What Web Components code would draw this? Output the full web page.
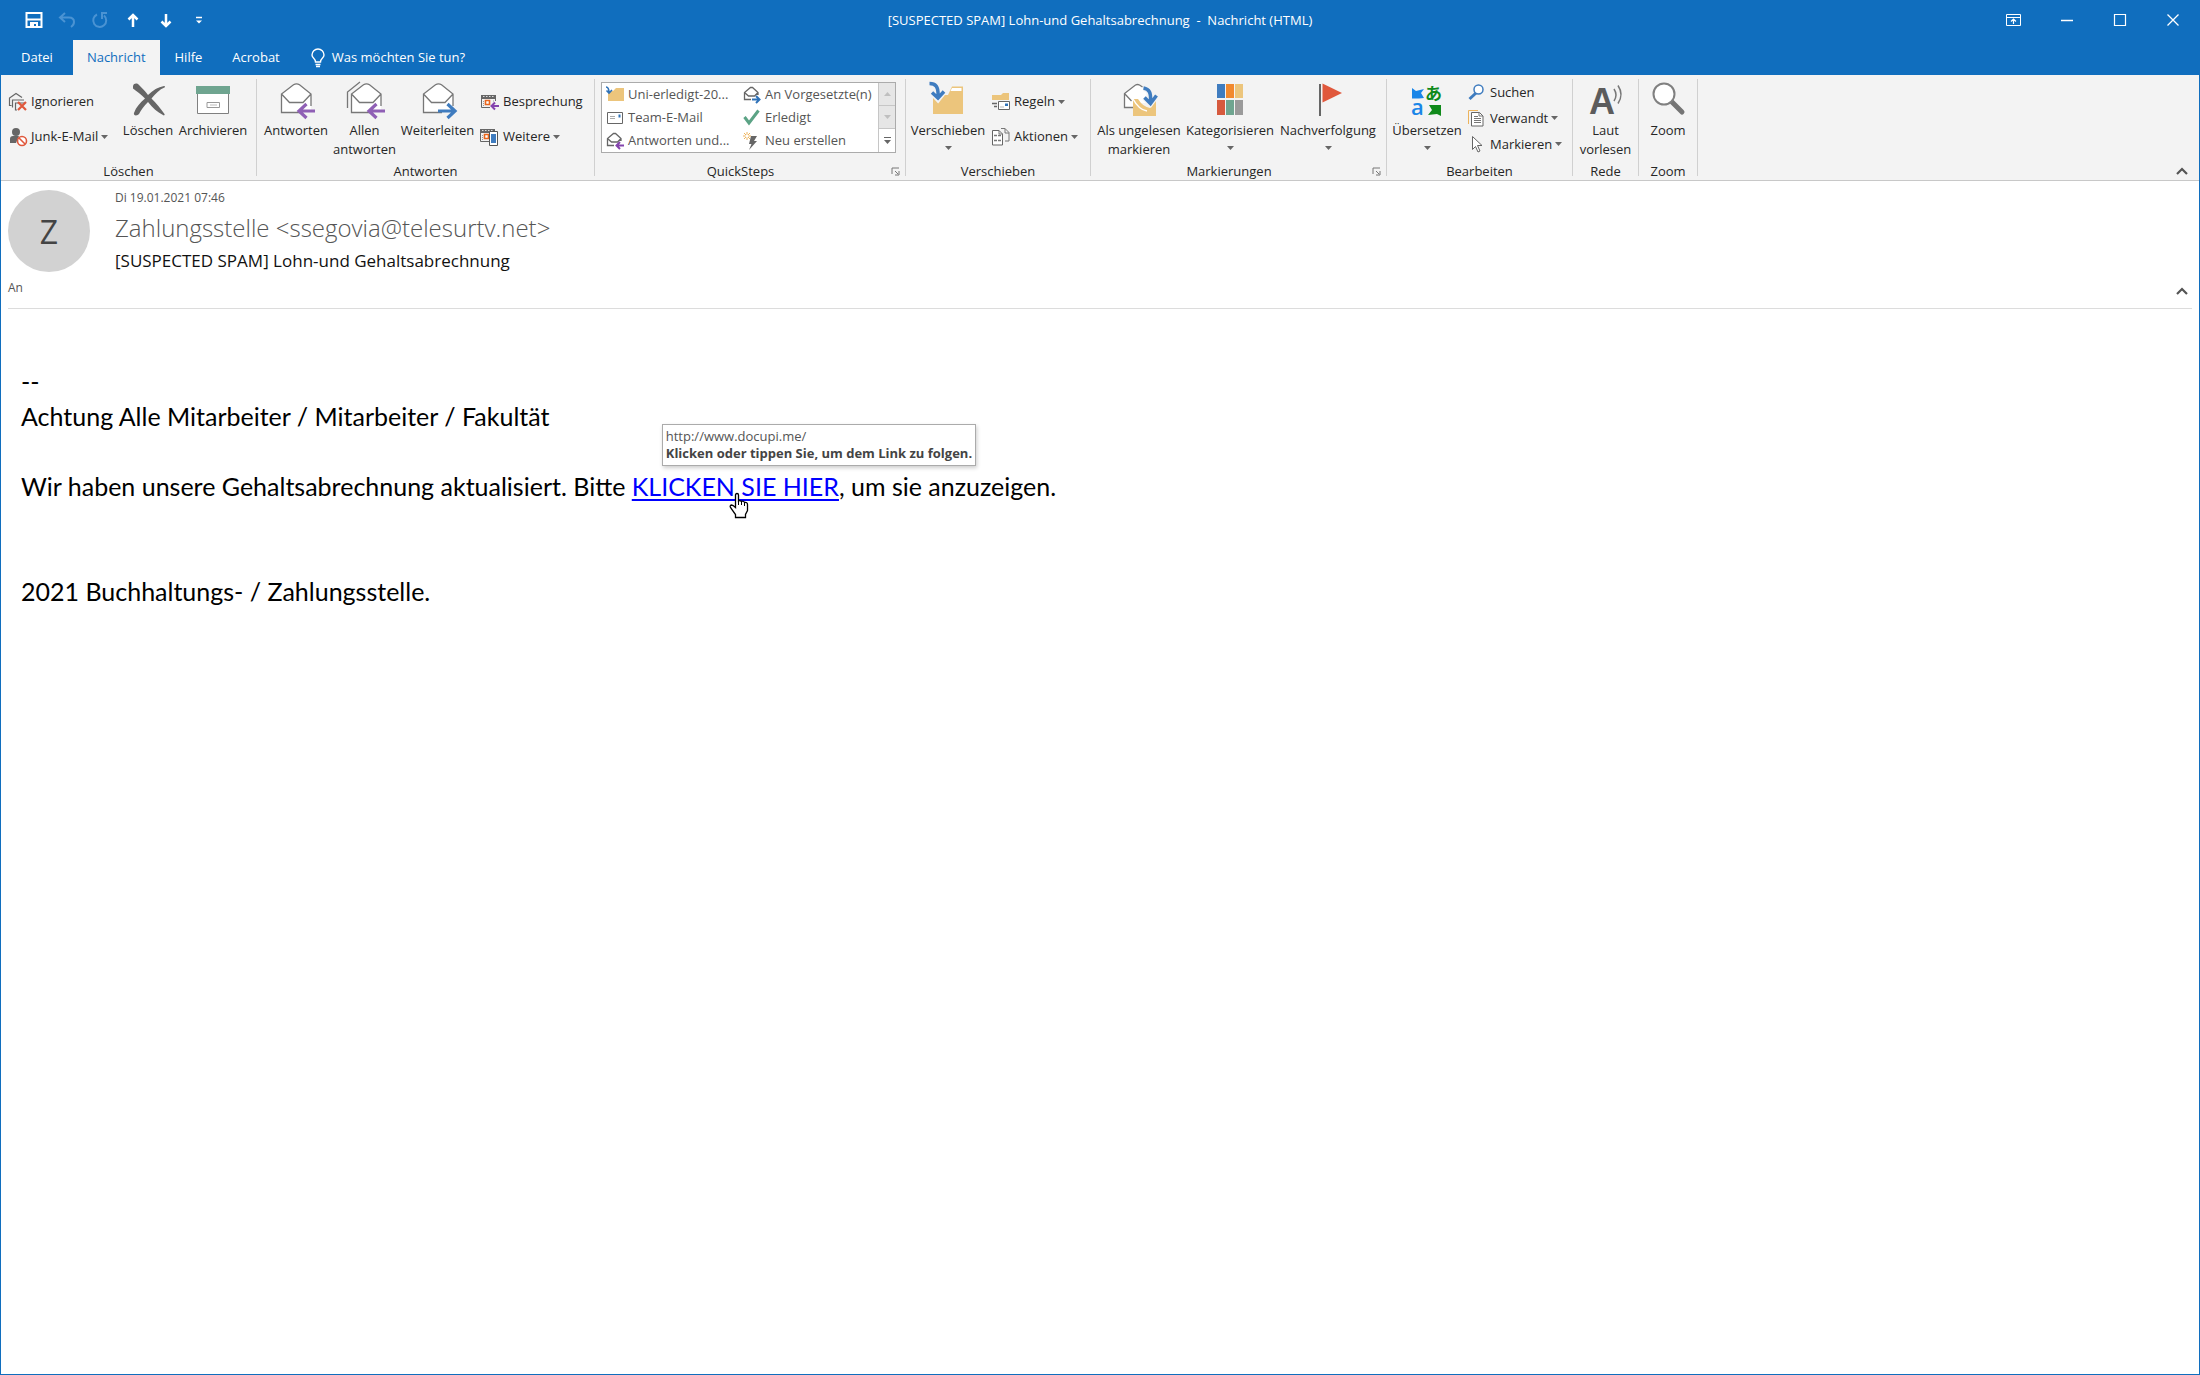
<!DOCTYPE html>
<html lang="de">
<head>
<meta charset="utf-8">
<title>[SUSPECTED SPAM] Lohn-und Gehaltsabrechnung - Nachricht (HTML)</title>
<style>
  html, body {
    margin: 0;
    min-height: 100vh;
  }
  body {
    display: flex;
    font-family: "Open Sans", "Noto Sans", sans-serif;
    font-size: 13px;
    line-height: 19px;
    color: #262626;
    --theme-blue: #106ebe;
    --theme-ribbon: #f3f3f3;
  }
</style>
</head>
<body>
<mail-window>
  <title-bar slot="top">[SUSPECTED SPAM] Lohn-und Gehaltsabrechnung&nbsp; -&nbsp; Nachricht (HTML)</title-bar>
  <ribbon-tabs slot="top"></ribbon-tabs>
  <mail-ribbon slot="top">
    <ribbon-group label="Löschen" style="--group-w: 255px; --group-start: 7px">
      <ribbon-stack style="--w: 112px">
        <small-button icon="ignore" label="Ignorieren"></small-button>
        <small-button icon="junk" label="Junk-E-Mail" menu></small-button>
      </ribbon-stack>
      <big-button icon="delete" label="Löschen" style="--w: 56px"></big-button>
      <big-button icon="archive" label="Archivieren" style="--w: 74px"></big-button>
    </ribbon-group>
    <ribbon-group label="Antworten" style="--group-w: 337px; --group-start: 4px">
      <big-button icon="reply" label="Antworten" style="--w: 70px"></big-button>
      <big-button icon="replyall" label="Allen antworten" style="--w: 67px"></big-button>
      <big-button icon="forward" label="Weiterleiten" style="--w: 79px"></big-button>
      <ribbon-stack style="--start: 3px">
        <small-button icon="meeting" label="Besprechung"></small-button>
        <small-button icon="more" label="Weitere" menu></small-button>
      </ribbon-stack>
    </ribbon-group>
    <ribbon-group label="QuickSteps" launcher style="--group-w: 310px; --group-start: 6px">
      <quick-steps></quick-steps>
    </ribbon-group>
    <ribbon-group label="Verschieben" style="--group-w: 184px; --group-start: 3px">
      <big-button icon="move" label="Verschieben" menu style="--w: 78px"></big-button>
      <ribbon-stack style="--start: 4px">
        <small-button icon="rules" label="Regeln" menu></small-button>
        <small-button icon="actions" label="Aktionen" menu></small-button>
      </ribbon-stack>
    </ribbon-group>
    <ribbon-group label="Markierungen" launcher style="--group-w: 295px; --group-start: 3px">
      <big-button icon="unread" label="Als ungelesen markieren" style="--w: 90px"></big-button>
      <big-button icon="categorize" label="Kategorisieren" menu style="--w: 92px"></big-button>
      <big-button icon="flag" label="Nachverfolgung" menu style="--w: 104px"></big-button>
    </ribbon-group>
    <ribbon-group label="Bearbeiten" style="--group-w: 185px; --group-start: 3px">
      <big-button icon="translate" label="Übersetzen" menu style="--w: 74px"></big-button>
      <ribbon-stack dense style="--start: 3px">
        <small-button icon="find" label="Suchen"></small-button>
        <small-button icon="related" label="Verwandt" menu></small-button>
        <small-button icon="select" label="Markieren" menu></small-button>
      </ribbon-stack>
    </ribbon-group>
    <ribbon-group label="Rede" style="--group-w: 65px">
      <big-button icon="read" label="Laut vorlesen" style="--w: 65px"></big-button>
    </ribbon-group>
    <ribbon-group label="Zoom" style="--group-w: 58px">
      <big-button icon="zoom" label="Zoom" style="--w: 58px"></big-button>
    </ribbon-group>
  </mail-ribbon>
  <message-header slot="top" initial="Z">
    <span slot="date">Di 19.01.2021 07:46</span>
    <span slot="from">Zahlungsstelle &lt;ssegovia@telesurtv.net&gt;</span>
    <span slot="subject">[SUSPECTED SPAM] Lohn-und Gehaltsabrechnung</span>
  </message-header>
  <message-body>
    <p>--</p>
    <p>Achtung Alle Mitarbeiter / Mitarbeiter / Fakultät</p>
    <p><br></p>
    <p>Wir haben unsere Gehaltsabrechnung aktualisiert. Bitte <tip-link href="http://www.docupi.me/">KLICKEN SIE HIER</tip-link>, um sie anzuzeigen.</p>
    <p><br></p>
    <p><br></p>
    <p>2021 Buchhaltungs- / Zahlungsstelle.</p>
  </message-body>
</mail-window>

<script>
const svg = (w, h, inner) =>
  `<svg width="${w}" height="${h}" viewBox="0 0 ${w} ${h}" fill="none" aria-hidden="true">${inner}</svg>`;

const envelope = `
  <path d="M5.500 14L18 4.500q2.500-1.500 5 0L35 14v18H6z" fill="#fff"/>
  <path d="M24 32.500H5.500V14L17.500 4.800q3-2 6 0L35 14v12M5.500 14l8 8.500h13.500l8-8.500" stroke="#777" stroke-width="1.300"/>`;
const leftArrow = `<path d="M39 31H23M30.500 24l-7.500 7 7.500 7" stroke="#8f5fb5" stroke-width="3.200"/>`;
const smallEnvelope = `<path d="M9 14.500H2.500V7.500L8.500 2.500h2L16 7.500V10M2.500 7.500l4 3.500h6L16 7.500" stroke="#666" stroke-width="1.300" fill="#fff"/>`;
const calendar = `
  <path d="M1 3h15v4H1z" fill="#666"/><path d="M3 4.500h1.500M6 4.500h1.500M9 4.500h1.500M12 4.500h1.500" stroke="#ddd"/>
  <path d="M1.500 6v9.500H10M15.500 6v3" stroke="#666"/><path d="M3.500 9v5M13.500 8.500v1" stroke="#999" stroke-dasharray="1 1"/>
  <path d="M5.500 8.500h4v4h-4z" stroke="#e9661c" stroke-width="1.600" fill="#fff"/>`;

const icons = {
  delete: svg(40, 40, `<path d="M5 6c1-3 4-3 6-1 4 4 6 6 9 10 5-5 10-8 16-9 1 0 1.500 1 .5 1.500-5 2-9 6-13 11 5 5 9 10 13 15.500.5 1-.5 2-1.500 1-6-3-10-7-15-13-4 4-7 8-9 12-1.500 2-6 2-5-1 2-6 6-10 11-14.500C13 14 8 11 5 8.500z" fill="#666"/>`),
  archive: svg(40, 40, `<path d="M4.500 14v19.500h31V14" fill="#fff" stroke="#808080"/><path d="M3 6h34v8H3z" fill="#6fa590"/><path d="M14 22.500h12.500v5H14z" stroke="#999"/><path d="M17 25h7" stroke="#bbb"/>`),
  reply: svg(40, 40, envelope + leftArrow),
  replyall: svg(40, 40, `<path d="M2.500 28V12L15 2" stroke="#777" stroke-width="1.300"/><g transform="translate(1)">${envelope}${leftArrow}</g>`),
  forward: svg(40, 40, envelope + `<path d="M20 31h17M29.500 24l7.500 7-7.500 7" stroke="#3f7cbf" stroke-width="3.200"/>`),
  move: svg(40, 40, `<path d="M5 15h15l4-8.500h11V34H5z" fill="#ecc57c"/><path d="M22.500 11l1.500-3h9.500v3z" fill="#fff"/><path d="M1.500 3.500c6 0 9 3 8.500 12M4 12.500l6 6.500 6-7.500" stroke="#f3f3f3" stroke-width="6"/><path d="M1.500 3.500c6 0 9 3 8.500 12M4 12.500l6 5.500 6-6.500" stroke="#3f7cbf" stroke-width="3.500"/>`),
  unread: svg(40, 40, `<path d="M14 27.500H5.500V13.500L16.500 5q2-1 4 0l7 5v13H14z" fill="#fff"/><path d="M14 27.500H5.500V13.500L16.500 5q2-1 4 0l3 2M5.500 13.500l7 7.500" stroke="#777" stroke-width="1.300"/><path d="M14 19h5q5 8 12 9l6-8v16H14z" fill="#ecc57c"/><path d="M14 19q6 11 14 12" stroke="#fff" stroke-width="1.500"/><path d="M24.500 8c6 1 7.500 5 7 13M25.500 17.500l6 6 6-8" stroke="#f3f3f3" stroke-width="6"/><path d="M24.500 8c6 1 7.500 5 7 13M25.500 17.500l6 6 6-8" stroke="#3f7cbf" stroke-width="3.500"/>`),
  categorize: svg(40, 40, `<path d="M7 4h8v14H7z" fill="#3f7cbf"/><path d="M16 4h8v14h-8z" fill="#f2892e"/><path d="M25 4h8v14h-8z" fill="#ecc57c"/><path d="M7 20h8v15H7z" fill="#d65a3e"/><path d="M16 20h8v15h-8z" fill="#6fa590"/><path d="M25 20h8v15h-8z" fill="#9a9a9a"/>`),
  flag: svg(40, 40, `<path d="M11 4h2v32h-2z" fill="#666"/><path d="M14.500 3.500L34 13l-19.500 9.500z" fill="#e0583c"/>`),
  translate: svg(40, 40, `<path d="M5 8l4 3 8-2-3 4 3 5-5 .5H5z" fill="#1a86e8"/><path d="M34 36l-4-2-9 1 4-5-3-5h12z" fill="#0f8a1a"/><text x="4" y="35" font-family="Open Sans, sans-serif" font-size="22" font-weight="600" fill="#1a86e8">a</text><text x="18" y="20" font-family="Noto Sans CJK JP, sans-serif" font-size="17" font-weight="700" fill="#0f8a1a">あ</text>`),
  read: svg(40, 40, `<text x="3" y="34" font-family="Liberation Sans, sans-serif" font-size="36" font-weight="700" fill="#5c5c5c">A</text><path d="M28 9q4 6 0 12M32 5.500q6 9 0 18" stroke="#777" stroke-width="1.500"/>`),
  zoom: svg(40, 40, `<path d="M23 21l11 11" stroke="#757575" stroke-width="5" stroke-linecap="round"/><circle cx="16" cy="14" r="10.500" fill="#fff" stroke="#808080" stroke-width="2"/>`),

  ignore: svg(20, 20, `<path d="M3.500 13.500H1.500V6L8 1.500l6 4M4.500 15.500V8H16M9 18H7.500v-7H17" stroke="#666" stroke-width="1.200"/><path d="M10 10l8 8M18 10l-8 8" stroke="#e0583c" stroke-width="2.200"/>`),
  junk: svg(20, 20, `<circle cx="8" cy="5" r="4" fill="#666"/><path d="M2 16v-4q0-3 3-3h6l-3 7z" fill="#666"/><circle cx="14" cy="14" r="4.500" fill="#fff" stroke="#e0583c" stroke-width="1.600"/><path d="M11 11l6 6" stroke="#e0583c" stroke-width="1.600"/>`),
  meeting: svg(20, 20, calendar + `<path d="M19 14h-7M15 10.500L11.500 14l3.500 3.500" stroke="#8444ad" stroke-width="2"/>`),
  more: svg(20, 20, `<g transform="translate(-1 -1)">${calendar}</g><path d="M9.500 4.500h8v14h-8z" fill="#fff" stroke="#555"/><path d="M11 7h5v9h-5z" fill="#3f7cbf"/>`),
  rules: svg(20, 20, `<path d="M1 3h9l2-2h6v7H1z" fill="#ecc57c"/><path d="M1 11.500h5M3 14.500h3" stroke="#666" stroke-width="1.500"/><path d="M7.500 9.500h11v8h-11z" fill="#fff" stroke="#666"/><path d="M14 11.500h3v2.500h-3z" fill="#2f72b8"/><path d="M9 15h4" stroke="#bbb"/>`),
  actions: svg(20, 20, `<path d="M1.500 3.500H8l3.500 3.500v11h-10z" fill="#fff" stroke="#666"/><path d="M8 3.500V7h3.500M10 1.500h4l4 4V14h-4M14 1.500V6h4" stroke="#777"/><path d="M3 8.500h3M7 8.500h3M3 13.500h3M7 13.500h3" stroke="#777" stroke-width="1.500"/>`),
  find: svg(20, 20, `<path d="M9 11l-6.500 6" stroke="#3f7cbf" stroke-width="3"/><circle cx="11.500" cy="7.500" r="4.500" fill="#fff" stroke="#3f7cbf" stroke-width="1.500"/>`),
  related: svg(20, 20, `<path d="M1.500 16V2.500H11" stroke="#ecb35c"/><path d="M4.500 4.500h8l3.500 3.500v10H4.500z" fill="#fff" stroke="#666"/><path d="M12 4.500V8h4M7 8.500h4M7 10.500h7M7 12.500h7M7 14.500h7" stroke="#777"/>`),
  select: svg(20, 20, `<path d="M5.500 2.500v13l3-3 2.500 5.500 2-1-2.500-5.500h4.500z" fill="#fff" stroke="#666"/>`),

  folder: svg(20, 20, `<path d="M3 6h5l3-3h8v13H3z" fill="#ecc57c"/><path d="M1 2q3 0 3 6M1.500 5.500L4 8l3-3" stroke="#2f72b8" stroke-width="1.600"/>`),
  team: svg(20, 20, `<path d="M2.500 4.500h15v11h-15z" fill="#fff" stroke="#666"/><path d="M13.500 6.500h2v3h-2z" fill="#2f72b8"/><path d="M5 8.500h5M5 10.500h5" stroke="#aaa"/>`),
  replystep: svg(20, 20, smallEnvelope + `<path d="M19 14.500h-7M15 11l-3.500 3.500L15 18" stroke="#8444ad" stroke-width="2"/>`),
  forwardstep: svg(20, 20, smallEnvelope + `<path d="M10 14.500h7M14 11l3.500 3.500L14 18" stroke="#2f72b8" stroke-width="2"/>`),
  done: svg(20, 20, `<path d="M2.500 9l4.500 6L16.500 2.500" stroke="#5ba385" stroke-width="3"/>`),
  create: svg(20, 20, `<path d="M9 5h6l-3 5h3l-8 9 2.500-6H7z" fill="#666"/><path d="M5 1v8M1 5h8M2 2l6 6M8 2L2 8" stroke="#ecb35c"/><circle cx="5" cy="5" r="1.500" fill="#fff"/>`),

  save: svg(20, 20, `<path d="M2.500 3h15v14h-15z" stroke="#fff" stroke-width="2"/><path d="M3 9.500h14" stroke="#fff" stroke-width="2"/><path d="M6 17v-5h8v5h-2v-3h-2v3z" fill="#fff"/>`),
  undo: svg(20, 20, `<path d="M8 3L3 7.500 8 12M3 7.500h9q5 0 5 4.500 0 3-3 5" stroke="#4a93d3" stroke-width="2"/>`),
  redo: svg(20, 20, `<path d="M7 4.500a6.500 6.500 0 1 0 7 1M11 3h6M12 3v6" stroke="#4a93d3" stroke-width="2"/>`),
  up: svg(20, 20, `<path d="M10 17V4.500M5.500 9.500L10 5l4.500 4.500" stroke="#fff" stroke-width="2.500"/>`),
  down: svg(20, 20, `<path d="M10 4v12.500M5.500 11.500L10 16l4.500-4.500" stroke="#fff" stroke-width="2.500"/>`),
  customize: svg(20, 20, `<path d="M7 7.500h6" stroke="#fff" stroke-width="1.500"/><path d="M7 10.500h6l-3 3z" fill="#fff"/>`),
  display: svg(20, 20, `<path d="M2.500 4.500h14v11h-14zM2.500 7.500h14" stroke="#fff"/><path d="M9.500 14V9M7 11.500L9.500 9l2.500 2.500" stroke="#fff" stroke-width="1.200"/>`),
  minimize: svg(20, 20, `<path d="M4 10.500h12" stroke="#fff" stroke-width="1.500"/>`),
  maximize: svg(20, 20, `<path d="M4.500 4.500h11v11h-11z" stroke="#fff" stroke-width="1.200"/>`),
  close: svg(20, 20, `<path d="M4.500 4.500l11 11M15.500 4.500l-11 11" stroke="#fff" stroke-width="1.300"/>`),
  bulb: svg(16, 20, `<path d="M5.500 14q0-2-2-4Q2 8.500 2 7a6 6 0 0 1 12 0q0 1.500-1.500 3-2 2-2 4zM5.500 16.500h5M6 18.500h4" stroke="#fff" stroke-width="1.400"/>`),
  launcher: svg(9, 9, `<path d="M1 7V1h7M4 4l3 3M8 4v4H4" stroke="#777"/>`),
  caret: svg(7, 4, `<path d="M0 0h7L3.500 4z" fill="#666"/>`),
  chevron: svg(14, 10, `<path d="M2 8l5-5 5 5" stroke="#555" stroke-width="2.200"/>`),
  hand: svg(20, 27, `<path d="M6.500 14V3q0-1.500 1.500-1.500T9.500 3v6q1.500-1 3 .5 2-1 3 1 3-.5 3 2v6l-2 4v3h-10v-3l-5-7q-1-2 1-2.500 1.500 0 4 2.500z" fill="#fff" stroke="#000" stroke-width="1.300"/><path d="M9.500 9v4M12.500 10v3M15.500 11v3" stroke="#000"/>`),
};

const base = `
  * { box-sizing: border-box; }
  svg { display: block; flex: none; overflow: visible; }
  button {
    margin: 0;
    padding: 0;
    border: 0;
    background: none;
    font: inherit;
    color: inherit;
    cursor: pointer;
  }`;

class BaseElement extends HTMLElement {
  connectedCallback() {
    if (this.shadowRoot) return;
    const template = document.createElement("template");
    template.innerHTML = `<style>${base}${this.styles()}</style>${this.render()}`;
    this.attachShadow({ mode: "open" }).appendChild(template.content.cloneNode(true));
  }
  attr(name) {
    return this.getAttribute(name) || "";
  }
}

class MailWindow extends BaseElement {
  styles() {
    return `
    :host {
      box-sizing: border-box;
      display: flex;
      flex-direction: column;
      flex: 1;
      min-width: 0;
      background: #fff;
      border: 1px solid var(--theme-blue);
      border-top: 0;
    }`;
  }
  render() {
    return `<slot name="top"></slot><slot></slot>`;
  }
}

class TitleBar extends BaseElement {
  styles() {
    return `
    :host {
      display: grid;
      grid-template-columns: 1fr auto 1fr;
      align-items: center;
      height: 40px;
      background: var(--theme-blue);
      color: #fff;
    }
    div { display: flex; }
    .quick { padding-left: 16px; }
    .controls { justify-content: flex-end; }
    button { display: grid; place-items: center; height: 38px; }
    .quick button { width: 33px; }
    .controls button { width: 53px; height: 36px; }`;
  }
  render() {
    const button = ([icon, label]) => `<button aria-label="${label}">${icons[icon]}</button>`;
    const quick = [["save", "Speichern"], ["undo", "Rückgängig"], ["redo", "Wiederholen"], ["up", "Vorheriges Element"], ["down", "Nächstes Element"], ["customize", "Symbolleiste anpassen"]];
    const controls = [["display", "Menüband anzeigen"], ["minimize", "Minimieren"], ["maximize", "Maximieren"], ["close", "Schließen"]];
    return `
    <div class="quick">${quick.map(button).join("")}</div>
    <span><slot></slot></span>
    <div class="controls">${controls.map(button).join("")}</div>`;
  }
}

class RibbonTabs extends BaseElement {
  styles() {
    return `
    :host {
      display: flex;
      height: 35px;
      background: var(--theme-blue);
      color: #fff;
    }
    button { padding: 0 15px; }
    .file { padding: 0 20px; }
    .active {
      padding: 0 14px;
      background: var(--theme-ribbon);
      color: var(--theme-blue);
    }
    .tell { display: flex; align-items: center; gap: 6px; }`;
  }
  render() {
    return `
    <button class="file">Datei</button>
    <button class="active">Nachricht</button>
    <button>Hilfe</button>
    <button>Acrobat</button>
    <button class="tell">${icons.bulb}<span>Was möchten Sie tun?</span></button>`;
  }
}

class MailRibbon extends BaseElement {
  styles() {
    return `
    :host {
      display: flex;
      height: 105px;
      background: var(--theme-ribbon);
      border-bottom: 1px solid #c8c8c8;
    }
    .collapse { margin: auto 10px 4px auto; }`;
  }
  render() {
    return `<slot></slot><button class="collapse" aria-label="Menüband reduzieren">${icons.chevron}</button>`;
  }
}

class RibbonGroup extends BaseElement {
  styles() {
    return `
    :host { display: flex; flex: none; }
    .group {
      display: flex;
      flex-direction: column;
      width: var(--group-w);
      padding-top: 4px;
    }
    .items { display: flex; flex: 1; padding-left: var(--group-start, 0); }
    .footer {
      display: flex;
      align-items: center;
      height: 18px;
    }
    .footer span { flex: 1; text-align: center; }
    .footer button { padding: 0 5px; }
    .line { width: 1px; margin: 4px 0; background: #d0d0d0; }`;
  }
  render() {
    const launcher = this.hasAttribute("launcher")
      ? `<button aria-label="${this.attr("label")} Optionen">${icons.launcher}</button>` : "";
    return `
    <div class="group">
      <div class="items"><slot></slot></div>
      <div class="footer"><span>${this.attr("label")}</span>${launcher}</div>
    </div>
    <div class="line"></div>`;
  }
}

class RibbonStack extends BaseElement {
  styles() {
    return `
    :host {
      --row: 35px;
      box-sizing: border-box;
      display: flex;
      flex-direction: column;
      width: var(--w, auto);
      padding-top: 5px;
      padding-left: var(--start, 0);
    }
    :host([dense]) { --row: 26px; padding-top: 0; }`;
  }
  render() {
    return `<slot></slot>`;
  }
}

class SmallButton extends BaseElement {
  styles() {
    return `
    :host { display: flex; height: var(--row); }
    button {
      display: flex;
      align-items: center;
      gap: 3px;
      white-space: nowrap;
    }`;
  }
  render() {
    const caret = this.hasAttribute("menu") ? icons.caret : "";
    return `<button>${icons[this.attr("icon")]}<span>${this.attr("label")}</span>${caret}</button>`;
  }
}

class BigButton extends BaseElement {
  styles() {
    return `
    :host { display: flex; flex: none; width: var(--w); }
    button {
      display: flex;
      flex-direction: column;
      align-items: center;
      gap: 1px;
      width: 100%;
      padding-top: 1px;
    }
    span { display: block; white-space: nowrap; }
    .caret { padding-top: 5px; }`;
  }
  render() {
    // the last word of a two-line label goes below the rest
    const label = this.attr("label").replace(/ (\S+)$/, "<br>$1");
    const caret = this.hasAttribute("menu") ? `<div class="caret">${icons.caret}</div>` : "";
    return `<button>${icons[this.attr("icon")]}<span>${label}</span>${caret}</button>`;
  }
}

class QuickSteps extends BaseElement {
  styles() {
    return `
    :host {
      box-sizing: border-box;
      display: flex;
      width: 295px;
      height: 71px;
      margin-top: 3px;
      background: #fff;
      border: 1px solid #ababab;
      color: #555;
    }
    .steps {
      flex: 1;
      display: grid;
      grid-template: repeat(3, 23px) / 137px 1fr;
      grid-auto-flow: column;
      padding-left: 3px;
    }
    .steps button { display: flex; align-items: center; gap: 3px; white-space: nowrap; }
    .scroll { display: grid; width: 17px; grid-template-rows: repeat(3, 1fr); border-left: 1px solid #c6c6c6; }
    .scroll button { display: grid; place-items: center; }
    .scroll button:disabled { background: #e6e6e6; border-bottom: 1px solid #c6c6c6; }
    .scroll button:disabled svg { opacity: 0.3; }
    .up svg { rotate: 180deg; }
    .scroll .all { align-content: center; gap: 2px; }
    .all i { width: 7px; height: 1px; background: #666; }`;
  }
  render() {
    const steps = [
      ["folder", "Uni-erledigt-20..."], ["team", "Team-E-Mail"], ["replystep", "Antworten und..."],
      ["forwardstep", "An Vorgesetzte(n)"], ["done", "Erledigt"], ["create", "Neu erstellen"],
    ];
    return `
    <div class="steps">
      ${steps.map(([icon, label]) => `<button>${icons[icon]}<span>${label}</span></button>`).join("")}
    </div>
    <div class="scroll">
      <button class="up" disabled aria-label="Nach oben">${icons.caret}</button>
      <button disabled aria-label="Nach unten">${icons.caret}</button>
      <button class="all" aria-label="Alle anzeigen"><i></i>${icons.caret}</button>
    </div>`;
  }
}

class MessageHeader extends BaseElement {
  styles() {
    return `
    :host {
      display: grid;
      grid-template-columns: 82px 1fr auto;
      column-gap: 25px;
      margin: 0 7px;
      padding-top: 8px;
      border-bottom: 1px solid #dcdcdc;
      color: #555;
    }
    .avatar {
      display: grid;
      place-items: center;
      height: 82px;
      margin-top: 1px;
      border-radius: 50%;
      background: #d2d2d2;
      font-size: 32px;
      color: #444;
    }
    .date { font-size: 12px; line-height: 18px; }
    .from { font-size: 24px; font-weight: 300; line-height: 42px; }
    .subject { font-size: 17px; line-height: 24px; color: #111; font-weight: 500; }
    .to { grid-column: 1; font-size: 12px; height: 35px; padding-top: 5px; }
    .fold { grid-column: 3; align-self: center; margin-right: 3px; }`;
  }
  render() {
    return `
    <div class="avatar">${this.attr("initial")}</div>
    <div>
      <div class="date"><slot name="date"></slot></div>
      <div class="from"><slot name="from"></slot></div>
      <div class="subject"><slot name="subject"></slot></div>
    </div>
    <div class="to">An</div>
    <button class="fold" aria-label="Kopfzeile reduzieren">${icons.chevron}</button>`;
  }
}

class MessageBody extends BaseElement {
  styles() {
    return `
    :host {
      display: block;
      flex: 1;
      padding: 55px 20px;
      font-family: Lato, "Open Sans", sans-serif;
      font-size: 25px;
      line-height: 35px;
      color: #000;
    }
    ::slotted(p) { margin: 0; }`;
  }
  render() {
    return `<slot></slot>`;
  }
}

class TipLink extends BaseElement {
  styles() {
    return `
    :host { position: relative; display: inline-block; }
    a { color: #00f; text-decoration-thickness: 2px; text-underline-offset: 3px; }
    .tip {
      position: absolute;
      left: 30px;
      bottom: 38px;
      padding: 3px;
      border: 1px solid #ababab;
      background: #fff;
      box-shadow: 1px 2px 4px rgba(0, 0, 0, 0.2);
      font: 13px/17px "Open Sans", sans-serif;
      color: #555;
      white-space: nowrap;
    }
    b { display: block; color: #444; }
    .hand { position: absolute; left: 97px; top: 23px; }`;
  }
  render() {
    return `
    <a href="${this.attr("href")}"><slot></slot></a>
    <div class="tip" role="tooltip">${this.attr("href")}<b>Klicken oder tippen Sie, um dem Link zu folgen.</b></div>
    <div class="hand">${icons.hand}</div>`;
  }
}

customElements.define("mail-window", MailWindow);
customElements.define("title-bar", TitleBar);
customElements.define("ribbon-tabs", RibbonTabs);
customElements.define("mail-ribbon", MailRibbon);
customElements.define("ribbon-group", RibbonGroup);
customElements.define("ribbon-stack", RibbonStack);
customElements.define("small-button", SmallButton);
customElements.define("big-button", BigButton);
customElements.define("quick-steps", QuickSteps);
customElements.define("message-header", MessageHeader);
customElements.define("message-body", MessageBody);
customElements.define("tip-link", TipLink);
</script>
</body>
</html>
